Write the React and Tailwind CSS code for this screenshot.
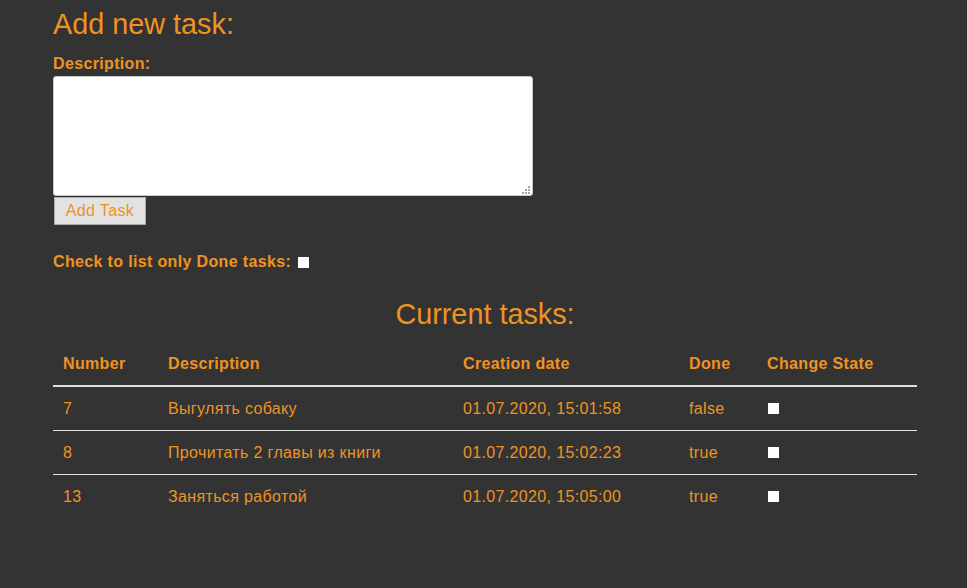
import { useState } from "react";

const TASKS = [
  { id: 7, text: "Выгулять собаку", created: "01.07.2020, 15:01:58", done: false },
  { id: 8, text: "Прочитать 2 главы из книги", created: "01.07.2020, 15:02:23", done: true },
  { id: 13, text: "Заняться работой", created: "01.07.2020, 15:05:00", done: true },
];

const box = "appearance-none w-[11px] h-[11px] bg-white m-0 align-middle";

function Grip() {
  // dotted resize grip, like the one in the corner of the textarea
  const dots = [
    [6, 0],
    [3, 3], [6, 3],
    [0, 6], [3, 6], [6, 6],
  ];
  return (
    <svg className="absolute right-[3px] bottom-[2px] pointer-events-none" width="8" height="8" viewBox="0 0 8 8">
      {dots.map(([x, y]) => (
        <rect key={`${x}-${y}`} x={x} y={y} width="2" height="2" fill="#a6a6a6" />
      ))}
    </svg>
  );
}

export default function App() {
  const [desc, setDesc] = useState("");

  return (
    <div
      className="min-h-[588px] bg-[#333333] text-[#ee9322] pl-[53px] pr-[50px] pt-[8px]"
      style={{ fontFamily: '"Liberation Sans", Arial, sans-serif' }}
    >
      <h2 className="text-[28.8px] leading-[33px] font-normal">Add new task:</h2>

      <label className="block mt-[14px] text-[16px] leading-[18px] tracking-[0.35px] font-bold">Description:</label>
      <div className="relative mt-[3px] w-[480px] h-[120px]">
        <textarea
          value={desc}
          onChange={(e) => setDesc(e.target.value)}
          className="block w-full h-full resize-none bg-white border border-[#c8c8c8] rounded-[3px] text-black"
        />
        <Grip />
      </div>
      <button className="block mt-px ml-px w-[92px] h-[28px] bg-[#e2e2e2] border border-[#a9a9a9] text-[16px] leading-[18px] tracking-[0.35px] text-[#ee9322]">
        Add Task
      </button>

      <div className="flex items-center mt-[28px] text-[16px] leading-[18px] tracking-[0.35px] font-bold">
        <span>Check to list only Done tasks:</span>
        <input type="checkbox" className={`${box} ml-[7px]`} />
      </div>

      <h2 className="mt-[27px] text-center text-[28.8px] leading-[33px] font-normal">Current tasks:</h2>

      <table className="mt-[12px] w-full table-fixed border-collapse text-[16px] leading-[18px] tracking-[0.35px]">
        <thead>
          <tr className="border-b-2 border-[#e0e0e0]">
            <th className="w-[105px] pl-[10px] pt-[12px] pb-[12px] text-left font-bold">Number</th>
            <th className="w-[295px] pl-[10px] pt-[12px] pb-[12px] text-left font-bold">Description</th>
            <th className="w-[226px] pl-[10px] pt-[12px] pb-[12px] text-left font-bold">Creation date</th>
            <th className="w-[78px] pl-[10px] pt-[12px] pb-[12px] text-left font-bold">Done</th>
            <th className="pl-[10px] pt-[12px] pb-[12px] text-left font-bold">Change State</th>
          </tr>
        </thead>
        <tbody>
          {TASKS.map((t, i) => (
            <tr key={t.id} className={i < TASKS.length - 1 ? "border-b border-[#e0e0e0]" : ""}>
              <td className="pl-[10px] pt-[13px] pb-[12px]">{t.id}</td>
              <td className="pl-[10px] pt-[13px] pb-[12px]">{t.text}</td>
              <td className="pl-[10px] pt-[13px] pb-[12px]">{t.created}</td>
              <td className="pl-[10px] pt-[13px] pb-[12px]">{t.done ? "true" : "false"}</td>
              <td className="pl-[11px] pt-[13px] pb-[12px]">
                <input type="checkbox" className={`${box} relative -top-px`} />
              </td>
            </tr>
          ))}
        </tbody>
      </table>
    </div>
  );
}
